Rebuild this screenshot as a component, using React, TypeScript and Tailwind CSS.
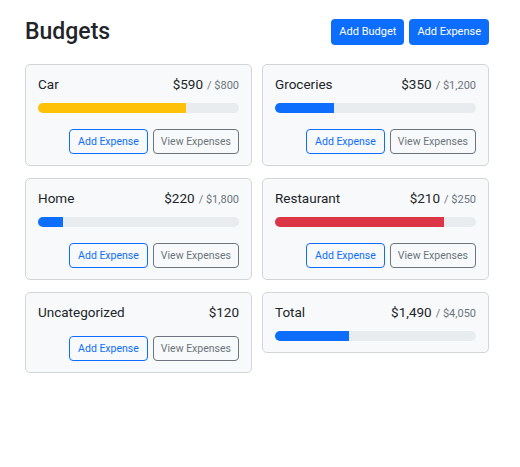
import React from "react";

interface Budget {
  name: string;
  amount: number;
  max?: number;
  color?: string;
  buttons?: boolean;
}

const budgets: Budget[] = [
  { name: "Car", amount: 590, max: 800, color: "bg-[#ffc107]", buttons: true },
  { name: "Groceries", amount: 350, max: 1200, color: "bg-[#0d6efd]", buttons: true },
  { name: "Home", amount: 220, max: 1800, color: "bg-[#0d6efd]", buttons: true },
  { name: "Restaurant", amount: 210, max: 250, color: "bg-[#dc3545]", buttons: true },
  { name: "Uncategorized", amount: 120, buttons: true },
  { name: "Total", amount: 1490, max: 4050, color: "bg-[#0d6efd]" },
];

const fmt = (n: number) => "$" + n.toLocaleString("en-US");

function BudgetCard({ name, amount, max, color, buttons }: Budget) {
  return (
    <div className="border border-[#d3d6d9] rounded-[5px] bg-[#f8f9fa] px-[12px] pt-[12px] pb-[11px]">
      {/* Title row */}
      <div className="flex justify-between items-baseline h-[16px] leading-[15px] text-[#212529]">
        <span className="text-[13.5px]">{name}</span>
        <span className="text-[13.5px]">
          {fmt(amount)}
          {max !== undefined && (
            <span className="text-[11px] text-[#6c757d] ml-[4px]">/ {fmt(max)}</span>
          )}
        </span>
      </div>

      {/* Progress */}
      {max !== undefined && (
        <div className="mt-[10px] h-[10px] rounded-full bg-[#e9ecef] overflow-hidden">
          <div className={`h-full ${color}`} style={{ width: `${(amount / max) * 100}%` }} />
        </div>
      )}

      {/* Actions */}
      {buttons && (
        <div className={`flex justify-end gap-[5px] ${max !== undefined ? "mt-[16px]" : "mt-[15px]"}`}>
          <button className="h-[25px] px-[8px] text-[10.5px] text-[#0d6efd] border border-[#0d6efd] rounded-[4px]">
            Add Expense
          </button>
          <button className="h-[25px] px-[7px] text-[10.5px] text-[#6c757d] border border-[#6c757d] rounded-[4px]">
            View Expenses
          </button>
        </div>
      )}
    </div>
  );
}

export default function App() {
  return (
    <div className="w-[520px] h-[467px] bg-white font-['Roboto',sans-serif] text-[#212529]">
      <div className="w-[464px] ml-[25px] pt-[19px]">
        {/* Header */}
        <div className="flex items-center justify-between h-[26px] mb-[19px]">
          <h1 className="text-[23px] font-medium leading-none -mt-[1px]">Budgets</h1>
          <div className="flex gap-[5px]">
            <button className="h-[26px] px-[8px] text-[11px] text-white bg-[#0d6efd] rounded-[4px]">
              Add Budget
            </button>
            <button className="h-[26px] px-[8px] text-[11px] text-white bg-[#0d6efd] rounded-[4px]">
              Add Expense
            </button>
          </div>
        </div>

        {/* Cards */}
        <div className="grid grid-cols-2 gap-x-[10px] gap-y-[12px] items-start">
          {budgets.map((b) => (
            <BudgetCard key={b.name} {...b} />
          ))}
        </div>
      </div>
    </div>
  );
}
